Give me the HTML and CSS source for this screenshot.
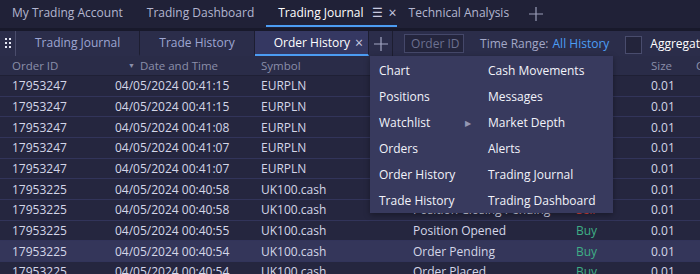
FILE: index.html
```html
<!DOCTYPE html>
<html lang="en">
<head>
  <meta charset="UTF-8">
  <title>Trading Journal</title>
  <link rel="stylesheet" href="styles.css">
</head>
<body>
<div class="app">

  <div class="topbar">
    <div class="ttab">My Trading Account</div>
    <div class="ttab">Trading Dashboard</div>
    <div class="ttab active">Trading Journal <span class="burger">&#9776;</span><span class="x">&#215;</span></div>
    <div class="ttab">Technical Analysis</div>
    <div class="tplus">
      <svg width="14" height="14" viewBox="0 0 14 14"><path d="M7 0v14M0 7h14" stroke="#9a9db8" stroke-width="1.2"/></svg>
    </div>
  </div>

  <div class="toolbar">
    <div class="grip">
      <svg width="7" height="11" viewBox="0 0 7 11"><g fill="#e6e8f5"><rect x="0" y="0" width="2" height="2"/><rect x="4" y="0" width="2" height="2"/><rect x="0" y="4" width="2" height="2"/><rect x="4" y="4" width="2" height="2"/><rect x="0" y="8" width="2" height="2"/><rect x="4" y="8" width="2" height="2"/></g></svg>
    </div>
    <div class="btab">Trading Journal</div>
    <div class="btab">Trade History</div>
    <div class="btab active">Order History <span class="x">&#215;</span></div>
    <div class="bplus">
      <svg width="14" height="14" viewBox="0 0 14 14"><path d="M7 0v14M0 7h14" stroke="#a3a7c4" stroke-width="1.2"/></svg>
    </div>
    <div class="search">Order ID</div>
    <div class="range">Time Range: <span class="blue">All History</span></div>
    <div class="check"></div>
    <div class="agg">Aggregate</div>
  </div>

  <div class="table">
    <div class="row head">
      <span>Order ID</span>
      <span class="sorted"><i>&#9660;</i>Date and Time</span>
      <span>Symbol</span>
      <span>Status</span>
      <span>Side</span>
      <span>Size</span>
      <span>Close Price</span>
    </div>
    <div class="row"><span>17953247</span><span>04/05/2024 00:41:15</span><span>EURPLN</span><span>Position Closed</span><span class="sell">Sell</span><span>0.01</span><span></span></div>
    <div class="row"><span>17953247</span><span>04/05/2024 00:41:15</span><span>EURPLN</span><span>Order Filled</span><span class="sell">Sell</span><span>0.01</span><span></span></div>
    <div class="row"><span>17953247</span><span>04/05/2024 00:41:08</span><span>EURPLN</span><span>Position Closing Pending</span><span class="sell">Sell</span><span>0.01</span><span></span></div>
    <div class="row"><span>17953247</span><span>04/05/2024 00:41:07</span><span>EURPLN</span><span>Position Opened</span><span class="buy">Buy</span><span>0.01</span><span></span></div>
    <div class="row"><span>17953247</span><span>04/05/2024 00:41:07</span><span>EURPLN</span><span>Order Filled</span><span class="buy">Buy</span><span>0.01</span><span></span></div>
    <div class="row"><span>17953225</span><span>04/05/2024 00:40:58</span><span>UK100.cash</span><span>Position Closed</span><span class="sell">Sell</span><span>0.01</span><span></span></div>
    <div class="row"><span>17953225</span><span>04/05/2024 00:40:58</span><span>UK100.cash</span><span>Position Closing Pending</span><span class="sell">Sell</span><span>0.01</span><span></span></div>
    <div class="row"><span>17953225</span><span>04/05/2024 00:40:55</span><span>UK100.cash</span><span>Position Opened</span><span class="buy">Buy</span><span>0.01</span><span></span></div>
    <div class="row hover"><span>17953225</span><span>04/05/2024 00:40:54</span><span>UK100.cash</span><span>Order Pending</span><span class="buy">Buy</span><span>0.01</span><span></span></div>
    <div class="row"><span>17953225</span><span>04/05/2024 00:40:54</span><span>UK100.cash</span><span>Order Placed</span><span class="buy">Buy</span><span>0.01</span><span></span></div>
  </div>

  <div class="menu">
    <div class="item">Chart</div>
    <div class="item">Cash Movements</div>
    <div class="item">Positions</div>
    <div class="item">Messages</div>
    <div class="item sub">Watchlist <span class="arrow">&#9654;</span></div>
    <div class="item">Market Depth</div>
    <div class="item">Orders</div>
    <div class="item">Alerts</div>
    <div class="item">Order History</div>
    <div class="item">Trading Journal</div>
    <div class="item">Trade History</div>
    <div class="item">Trading Dashboard</div>
  </div>

</div>
</body>
</html>
```

FILE: styles.css
```css
body {
  margin: 0;
  background: #25263f;
  font-family: "Open Sans", "Noto Sans", sans-serif;
  font-size: 12px;
  color: #d4d6e8;
  overflow: hidden;
}

.app {
  position: relative;
  width: 700px;
  height: 274px;
  overflow: hidden;
}

/* top tabs */
.topbar {
  height: 28px;
  display: flex;
  align-items: stretch;
  background: #202137;
  border-bottom: 3px solid #18192b;
}
.topbar > div,
.toolbar > div {
  flex-shrink: 0;
}
.ttab {
  padding: 0 12px;
  display: flex;
  align-items: center;
  color: #b3b6d0;
  white-space: nowrap;
  border-bottom: 2px solid transparent;
  margin-bottom: 1px;
}
.ttab.active {
  color: #ffffff;
  border-bottom-color: #4c9cf2;
  padding-right: 0;
}
.ttab .burger {
  margin-left: 8px;
  font-size: 12px;
  color: #c9cbe0;
}
.ttab .x {
  margin-left: 6px;
  font-size: 14px;
  color: #c9cbe0;
}
.tplus {
  display: flex;
  align-items: center;
  padding-left: 8px;
}

/* second row */
.toolbar {
  height: 25px;
  display: flex;
  align-items: stretch;
  background: #2b2d4a;
  white-space: nowrap;
}
.grip {
  display: flex;
  align-items: center;
  justify-content: center;
  border-right: 1px solid #4a4c6b;
  padding-left: 1px;
  box-sizing: border-box;
  width: 16px;
}
.btab {
  padding: 0 19px;
  display: flex;
  align-items: center;
  color: #9ea6d2;
  border-right: 1px solid #1d1e31;
  border-bottom: 2px solid transparent;
}
.btab.active {
  background: #353862;
  color: #ffffff;
  padding: 0 5px 0 19px;
  border-bottom-color: #4c9cf2;
}
.btab .x {
  margin-left: 5px;
  font-size: 14px;
  color: #c9cbe0;
}
.bplus {
  width: 23px;
  display: flex;
  align-items: center;
  justify-content: center;
  border-right: 1px solid #1d1e31;
}
.search {
  margin: 3px 0 3px 11px;
  width: 60px;
  box-sizing: border-box;
  border: 1px solid #45486a;
  background: #24253d;
  color: #6c7090;
  padding: 0 6px;
  display: flex;
  align-items: center;
}
.range {
  margin-left: 16px;
  display: flex;
  align-items: center;
  color: #a3a8c8;
}
.blue {
  color: #4c9ef5;
  margin-left: 4px;
}
.check {
  margin: 5px 0 2px 16px;
  width: 17px;
  box-sizing: border-box;
  border: 1px solid #494c6d;
  background: #23243b;
}
.agg {
  margin-left: 8px;
  display: flex;
  align-items: center;
  color: #ffffff;
}

/* table */
.row {
  display: grid;
  grid-template-columns: 103px 146px 152px 163px 75px 45px 1fr;
  height: 20.67px;
  align-items: center;
  border-bottom: 1px solid #32345a;
  box-sizing: border-box;
  white-space: nowrap;
}
.row span {
  padding-left: 12px;
  overflow: hidden;
}
.row.head {
  height: 20px;
  background: #2a2c48;
  border-bottom: 1px solid #1f2035;
  color: #8b8faa;
  font-size: 11.5px;
}
.row.head .sorted {
  padding-left: 25px;
}
.row.head i {
  font-style: normal;
  font-size: 7px;
  margin-right: 5px;
  vertical-align: 2px;
}
.row.hover {
  background: #34365a;
}
.buy {
  color: #3fae85;
}
.sell {
  color: #e0443c;
}

/* dropdown */
.menu {
  position: absolute;
  left: 370px;
  top: 56px;
  width: 243px;
  padding-top: 1px;
  background: #383a5e;
  display: grid;
  grid-template-columns: 109px 1fr;
  box-shadow: 0 2px 6px rgba(0, 0, 0, 0.35);
}
.menu .item {
  height: 26px;
  display: flex;
  align-items: center;
  padding-left: 9px;
  color: #f2f3fa;
}
.menu .sub {
  position: relative;
}
.menu .arrow {
  position: absolute;
  left: 95px;
  font-size: 8px;
  color: #9497b3;
}
```
